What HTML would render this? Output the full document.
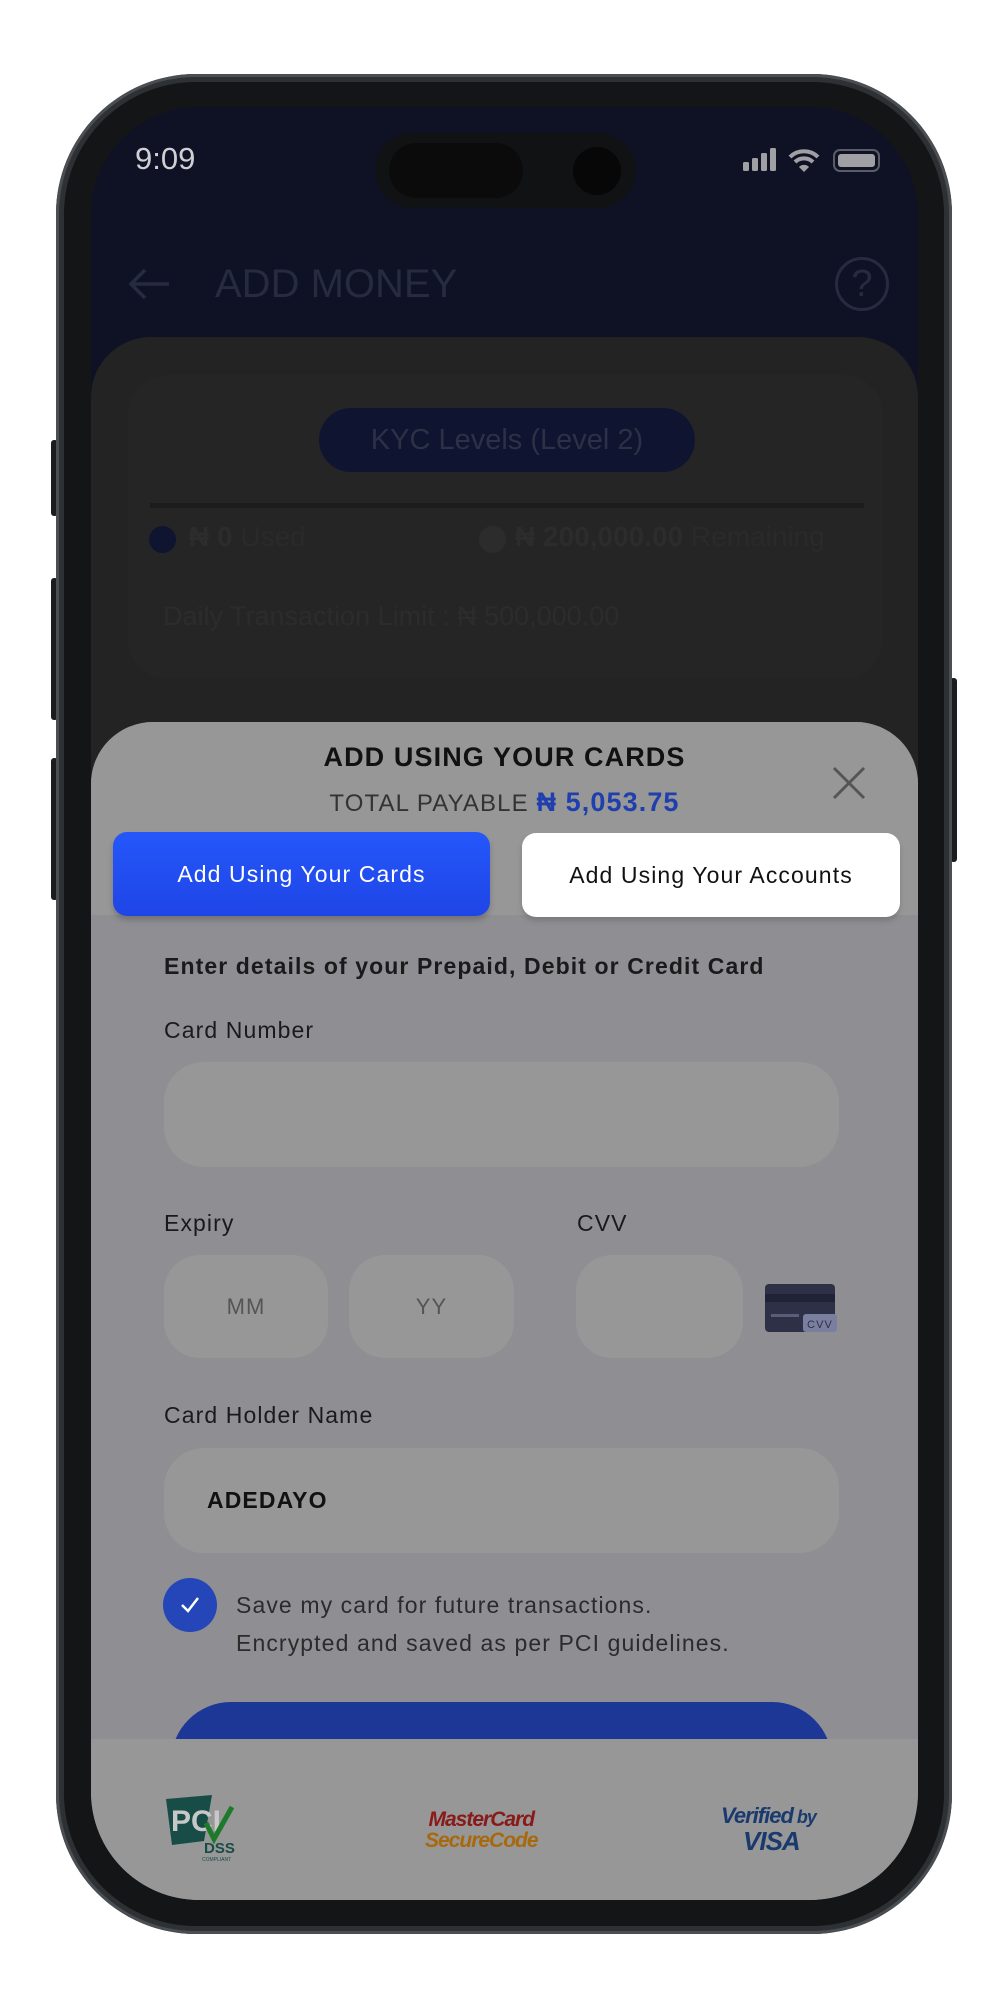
<!DOCTYPE html>
<html><head><meta charset="utf-8"><style>
*{margin:0;padding:0;box-sizing:border-box}
body{width:1000px;height:2000px;background:#fff;position:relative;overflow:hidden;font-family:"Liberation Sans",sans-serif}
.a{position:absolute}
.t{position:absolute;white-space:nowrap}
.sh .t,.sh .a{letter-spacing:1.1px}
</style></head><body>
<div class="a" style="left:51px;top:440px;width:7px;height:76px;background:#1a1c1e;border-radius:3px"></div>
<div class="a" style="left:51px;top:578px;width:7px;height:142px;background:#1a1c1e;border-radius:3px"></div>
<div class="a" style="left:51px;top:758px;width:7px;height:142px;background:#1a1c1e;border-radius:3px"></div>
<div class="a" style="left:950px;top:678px;width:7px;height:184px;background:#1a1c1e;border-radius:3px"></div>
<div class="a" style="left:56px;top:74px;width:896px;height:1860px;border-radius:140px;background:#2e3134;box-shadow:inset 0 0 0 3px #4a4e52"></div>
<div class="a" style="left:64px;top:82px;width:880px;height:1844px;border-radius:132px;background:#141516"></div>
<div class="a" style="left:91px;top:107px;width:827px;height:1793px;border-radius:108px;overflow:hidden;background:#0e1224">
  <div class="t" style="left:44px;top:34px;font-size:31px;color:#cfcfd4">9:09</div>
  <svg class="a" style="left:652px;top:40px" width="140" height="28" viewBox="0 0 140 28">
    <rect x="0" y="15" width="6" height="9" rx="1.5" fill="#a0a0a4"/><rect x="9" y="11" width="6" height="13" rx="1.5" fill="#a0a0a4"/><rect x="18" y="6" width="6" height="18" rx="1.5" fill="#a0a0a4"/><rect x="27" y="1" width="6" height="23" rx="1.5" fill="#a0a0a4"/>
    <path d="M47 10 A20 20 0 0 1 75 10" stroke="#a0a0a4" stroke-width="4" fill="none"/><path d="M52 15 A13 13 0 0 1 70 15" stroke="#a0a0a4" stroke-width="4" fill="none"/><path d="M56 20 L61 25 L66 20 A7 7 0 0 0 56 20Z" fill="#a0a0a4"/>
    <rect x="91" y="3" width="45" height="21" rx="6" fill="none" stroke="#5a5d68" stroke-width="2"/><rect x="95" y="7" width="37" height="13" rx="3" fill="#a0a0a4"/>
  </svg>
  <div class="a" style="left:284px;top:26px;width:261px;height:75px;border-radius:38px;background:#111213"></div>
  <div class="a" style="left:298px;top:36px;width:134px;height:55px;border-radius:28px;background:#0b0b0c"></div>
  <div class="a" style="left:482px;top:40px;width:48px;height:48px;border-radius:50%;background:#070708"></div>
  <svg class="a" style="left:36px;top:160px" width="44" height="34" viewBox="0 0 44 34"><path d="M42 17H4M18 3L4 17L18 31" stroke="#262b40" stroke-width="3.5" fill="none"/></svg>
  <div class="t" style="left:124px;top:155px;font-size:40px;color:#262b40">ADD MONEY</div>
  <div class="a" style="left:744px;top:150px;width:54px;height:54px;border-radius:50%;border:3px solid #262b40;color:#262b40;font-size:38px;text-align:center;line-height:48px">?</div>
  <div class="a" style="left:0;top:230px;width:827px;height:600px;border-radius:60px 60px 0 0;background:#232323"></div>
  <div class="a" style="left:37px;top:268px;width:755px;height:304px;border-radius:40px;background:#252525"></div>
  <div class="a" style="left:228px;top:301px;width:376px;height:64px;border-radius:32px;background:#0f1430;color:#2c3146;font-size:29px;text-align:center;line-height:64px">KYC Levels (Level 2)</div>
  <div class="a" style="left:59px;top:396px;width:714px;height:5px;background:#1c1c1c"></div>
  <div class="a" style="left:58px;top:419px;width:27px;height:27px;border-radius:50%;background:#0f1430"></div>
  <div class="t" style="left:98px;top:414px;font-size:28px;color:#2c2c2c;font-weight:bold">₦ 0 <span style="font-weight:normal;color:#2a2a2a">Used</span></div>
  <div class="a" style="left:388px;top:419px;width:27px;height:27px;border-radius:50%;background:#2c2c2c"></div>
  <div class="t" style="left:424px;top:414px;font-size:28px;color:#2c2c2c;font-weight:bold">₦ 200,000.00 <span style="font-weight:normal;color:#2a2a2a">Remaining</span></div>
  <div class="t" style="left:72px;top:494px;font-size:27px;color:#2c2c2c">Daily Transaction Limit : ₦ 500,000.00</div>
  <div class="a sh" style="left:0;top:615px;width:827px;height:1200px;border-radius:62px 62px 0 0;background:#8f8f93;overflow:hidden">
    <div class="a" style="left:0;top:0;width:827px;height:193px;background:#979797"></div>
    <div class="t" style="left:0;width:827px;text-align:center;top:20px;font-size:27px;font-weight:bold;color:#111">ADD USING YOUR CARDS</div>
    <div class="t" style="left:0;width:827px;text-align:center;top:65px;font-size:24px;color:#333">TOTAL PAYABLE <span style="color:#1f3fae;font-weight:bold;font-size:27px">₦ 5,053.75</span></div>
    <svg class="a" style="left:741px;top:44px" width="34" height="34" viewBox="0 0 34 34"><path d="M2 2L32 32M32 2L2 32" stroke="#555" stroke-width="3"/></svg>
    <div class="a" style="left:22px;top:110px;width:377px;height:84px;border-radius:14px;background:linear-gradient(#2457fb,#1f45e6);box-shadow:0 4px 6px rgba(0,0,0,.2);color:#fff;font-size:23px;text-align:center;line-height:84px">Add Using Your Cards</div>
    <div class="a" style="left:431px;top:111px;width:378px;height:84px;border-radius:14px;background:#fff;box-shadow:0 4px 6px rgba(0,0,0,.15);color:#111;font-size:23px;text-align:center;line-height:84px">Add Using Your Accounts</div>
    <div class="t" style="left:73px;top:231px;font-size:23px;font-weight:bold;color:#1a1a1a">Enter details of your Prepaid, Debit or Credit Card</div>
    <div class="t" style="left:73px;top:295px;font-size:23px;color:#1a1a1a">Card Number</div>
    <div class="a" style="left:73px;top:340px;width:675px;height:105px;border-radius:40px;background:#979797"></div>
    <div class="t" style="left:73px;top:488px;font-size:23px;color:#1a1a1a">Expiry</div>
    <div class="t" style="left:486px;top:488px;font-size:23px;color:#1a1a1a">CVV</div>
    <div class="a" style="left:73px;top:533px;width:164px;height:103px;border-radius:36px;background:#979797;color:#555;font-size:22px;text-align:center;line-height:103px">MM</div>
    <div class="a" style="left:258px;top:533px;width:165px;height:103px;border-radius:36px;background:#979797;color:#555;font-size:22px;text-align:center;line-height:103px">YY</div>
    <div class="a" style="left:485px;top:533px;width:167px;height:103px;border-radius:36px;background:#979797"></div>
    <svg class="a" style="left:674px;top:562px" width="74" height="50" viewBox="0 0 74 50"><rect x="0" y="0" width="70" height="48" rx="4" fill="#2e3048"/><rect x="0" y="10" width="70" height="8" fill="#202236"/><rect x="6" y="30" width="28" height="3" fill="#5a5d78"/><rect x="38" y="30" width="34" height="18" rx="3" fill="#7a7fa0"/><text x="55" y="44" font-size="11" font-family="Liberation Sans" fill="#2e3048" text-anchor="middle">CVV</text></svg>
    <div class="t" style="left:73px;top:680px;font-size:23px;color:#1a1a1a">Card Holder Name</div>
    <div class="a" style="left:73px;top:726px;width:675px;height:105px;border-radius:40px;background:#979797"></div>
    <div class="t" style="left:116px;top:765px;font-size:23px;font-weight:bold;color:#111">ADEDAYO</div>
    <div class="a" style="left:72px;top:856px;width:54px;height:54px;border-radius:50%;background:#2446b8"></div>
    <svg class="a" style="left:88px;top:873px" width="22" height="20" viewBox="0 0 22 20"><path d="M3 10L9 16L19 3" stroke="#fff" stroke-width="2.5" fill="none"/></svg>
    <div class="t" style="left:145px;top:864px;font-size:23px;color:#2b2b2b;line-height:38px">Save my card for future transactions.<br>Encrypted and saved as per PCI guidelines.</div>
    <div class="a" style="left:80px;top:980px;width:661px;height:80px;border-radius:60px 60px 0 0;background:#1d3796"></div>
    <div class="a" style="left:0;top:1017px;width:827px;height:200px;background:#979797"></div>
  </div>
  <svg class="a" style="left:73px;top:1686px" width="80" height="70" viewBox="0 0 80 70"><path d="M2 6L48 2L40 48L8 52Z" fill="#174d46"/><text x="7" y="38" font-size="30" font-weight="bold" font-family="Liberation Sans" fill="#c8c8c8">PCI</text><path d="M42 30L50 46L68 14" stroke="#1d7a2a" stroke-width="5" fill="none"/><text x="40" y="60" font-size="15" font-weight="bold" font-family="Liberation Sans" fill="#174d46">DSS</text><text x="38" y="68" font-size="5" font-family="Liberation Sans" fill="#174d46">COMPLIANT</text></svg>
  <div class="t" style="left:334px;top:1702px;font-size:21px;font-weight:bold;font-style:italic;line-height:21px;letter-spacing:-1px;text-align:center"><span style="color:#8a1a1a">MasterCard</span><br><span style="color:#a8680c">SecureCode</span></div>
  <div class="t" style="left:630px;top:1697px;font-size:22px;font-weight:bold;font-style:italic;line-height:24px;color:#1a3a6e;letter-spacing:-1px">Verified<span style="font-size:18px"> by</span><br><span style="margin-left:22px;font-size:26px">VISA</span></div>
</div>
</body></html>
